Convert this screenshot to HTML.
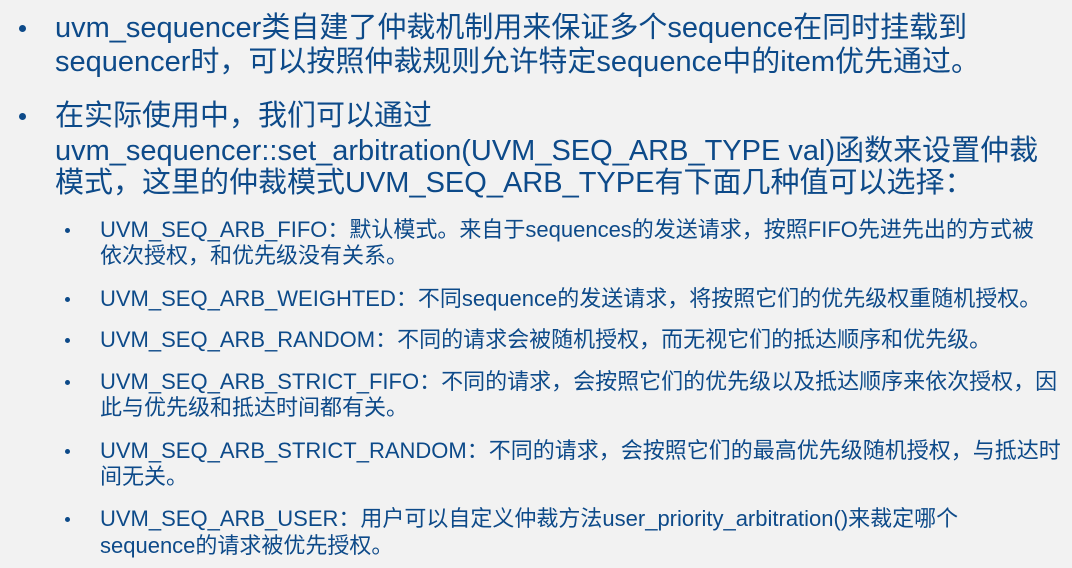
<!DOCTYPE html>
<html><head><meta charset="utf-8"><style>
html,body{margin:0;padding:0;background:#f2f2f2;width:1072px;height:568px;overflow:hidden}
body{position:relative;font-family:"Liberation Sans","Noto Sans CJK SC",sans-serif;color:#0d4a89}
.l{position:absolute;white-space:nowrap}
.t{font-size:29px;line-height:34px;height:34px;left:55px}
.s{font-size:22px;line-height:26px;height:26px;left:100px}
.b{position:absolute;border-radius:50%;background:#0d4a89}
.bt{width:7px;height:7px;left:19px}
.bs{width:5px;height:5px;left:65px}
</style></head><body>
<div class="b bt" style="top:25px"></div>
<div class="l t" style="top:11px">uvm_sequencer类自建了仲裁机制用来保证多个sequence在同时挂载到</div>
<div class="l t" style="top:45px">sequencer时，可以按照仲裁规则允许特定sequence中的item优先通过。</div>
<div class="b bt" style="top:113px"></div>
<div class="l t" style="top:99px">在实际使用中，我们可以通过</div>
<div class="l t" style="top:134px">uvm_sequencer::set_arbitration(UVM_SEQ_ARB_TYPE val)函数来设置仲裁</div>
<div class="l t" style="top:166px">模式，这里的仲裁模式UVM_SEQ_ARB_TYPE有下面几种值可以选择：</div>

<div class="b bs" style="top:228px"></div>
<div class="l s" style="top:217px">UVM_SEQ_ARB_FIFO：默认模式。来自于sequences的发送请求，按照FIFO先进先出的方式被</div>
<div class="l s" style="top:243px">依次授权，和优先级没有关系。</div>
<div class="b bs" style="top:297px"></div>
<div class="l s" style="top:286px">UVM_SEQ_ARB_WEIGHTED：不同sequence的发送请求，将按照它们的优先级权重随机授权。</div>
<div class="b bs" style="top:338px"></div>
<div class="l s" style="top:327px">UVM_SEQ_ARB_RANDOM：不同的请求会被随机授权，而无视它们的抵达顺序和优先级。</div>
<div class="b bs" style="top:380px"></div>
<div class="l s" style="top:369px">UVM_SEQ_ARB_STRICT_FIFO：不同的请求，会按照它们的优先级以及抵达顺序来依次授权，因</div>
<div class="l s" style="top:395px">此与优先级和抵达时间都有关。</div>
<div class="b bs" style="top:449px"></div>
<div class="l s" style="top:438px">UVM_SEQ_ARB_STRICT_RANDOM：不同的请求，会按照它们的最高优先级随机授权，与抵达时</div>
<div class="l s" style="top:464px">间无关。</div>
<div class="b bs" style="top:517px"></div>
<div class="l s" style="top:506px">UVM_SEQ_ARB_USER：用户可以自定义仲裁方法user_priority_arbitration()来裁定哪个</div>
<div class="l s" style="top:533px">sequence的请求被优先授权。</div>
</body></html>
